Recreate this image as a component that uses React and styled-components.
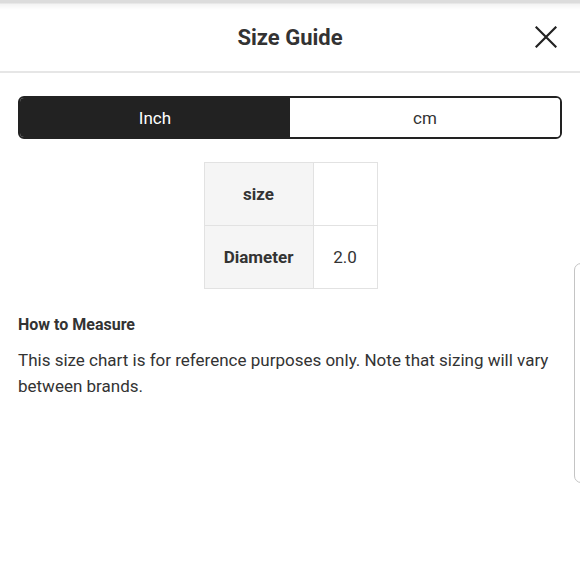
import React, { useState } from "react";
import styled, { createGlobalStyle } from "styled-components";

const GlobalStyle = createGlobalStyle`
  html, body {
    margin: 0;
    padding: 0;
    background: #fff;
  }
  body {
    font-family: Roboto, "Liberation Sans", sans-serif;
    color: #333;
  }
`;

const Page = styled.div`
  position: relative;
  width: 580px;
  height: 579px;
  overflow: hidden;
  background: #fff;
`;

const TopShade = styled.div`
  height: 10px;
  background: linear-gradient(#dcdcdc 0, #dcdcdc 3px, #f3f3f3 4px, #fff 10px);
`;

const Header = styled.header`
  height: 61px;
  display: flex;
  align-items: center;
  justify-content: center;
  position: relative;
  border-bottom: 2px solid #e6e6e6;
`;

const Title = styled.h2`
  margin: 0;
  font-size: 22px;
  font-weight: 700;
  color: #333;
  margin-top: -7px;
`;

const Close = styled.button`
  position: absolute;
  right: 23px;
  top: 16px;
  width: 22px;
  height: 22px;
  padding: 0;
  border: 0;
  background: none;
  display: flex;
  align-items: center;
  justify-content: center;
`;

const Body = styled.div`
  padding: 23px 18px 0;
`;

const Toggle = styled.div`
  display: flex;
  height: 43px;
  border: 2px solid #222;
  border-radius: 6px;
  overflow: hidden;
  box-sizing: border-box;
`;

const ToggleItem = styled.div`
  flex: 1;
  display: flex;
  align-items: center;
  justify-content: center;
  font-size: 17px;
  background: ${(p) => (p.$active ? "#222" : "#fff")};
  color: ${(p) => (p.$active ? "#fff" : "#333")};
`;

const TableWrap = styled.div`
  display: flex;
  justify-content: center;
  margin-top: 23px;
`;

const Table = styled.table`
  border-collapse: collapse;
  margin-left: 1px;
`;

const Cell = styled.td`
  border: 1px solid #e2e2e2;
  height: 62px;
  padding: 0;
  text-align: center;
  font-size: 17px;
  color: #333;
  width: ${(p) => (p.$head ? "108px" : "63px")};
  background: ${(p) => (p.$head ? "#f5f5f5" : "#fff")};
  font-weight: ${(p) => (p.$head ? 700 : 400)};
`;

const SectionTitle = styled.h3`
  margin: 26px 0 0;
  font-size: 16px;
  font-weight: 700;
  color: #333;
`;

const Note = styled.p`
  margin: 13px 0 0;
  font-size: 17px;
  line-height: 26px;
  color: #333;
`;

const SideHandle = styled.div`
  position: absolute;
  right: -10px;
  top: 263px;
  width: 14px;
  height: 218px;
  border: 1.5px solid #c4c4c4;
  border-radius: 7px;
  background: #fff;
`;

export default function App() {
  const [unit, setUnit] = useState("inch");
  return (
    <Page>
      <GlobalStyle />
      <TopShade />
      <Header>
        <Title>Size Guide</Title>
        <Close aria-label="close">
          <svg width="22" height="22" viewBox="0 0 22 22" fill="none" stroke="#222" strokeWidth="2.2" strokeLinecap="square">
            <path d="M1.5 1.5 L20.5 20.5 M20.5 1.5 L1.5 20.5" />
          </svg>
        </Close>
      </Header>
      <Body>
        <Toggle>
          <ToggleItem $active={unit === "inch"} onClick={() => setUnit("inch")}>Inch</ToggleItem>
          <ToggleItem $active={unit === "cm"} onClick={() => setUnit("cm")}>cm</ToggleItem>
        </Toggle>
        <TableWrap>
          <Table>
            <tbody>
              <tr>
                <Cell $head>size</Cell>
                <Cell></Cell>
              </tr>
              <tr>
                <Cell $head>Diameter</Cell>
                <Cell>2.0</Cell>
              </tr>
            </tbody>
          </Table>
        </TableWrap>
        <SectionTitle>How to Measure</SectionTitle>
        <Note>This size chart is for reference purposes only. Note that sizing will vary between brands.</Note>
      </Body>
      <SideHandle />
    </Page>
  );
}
